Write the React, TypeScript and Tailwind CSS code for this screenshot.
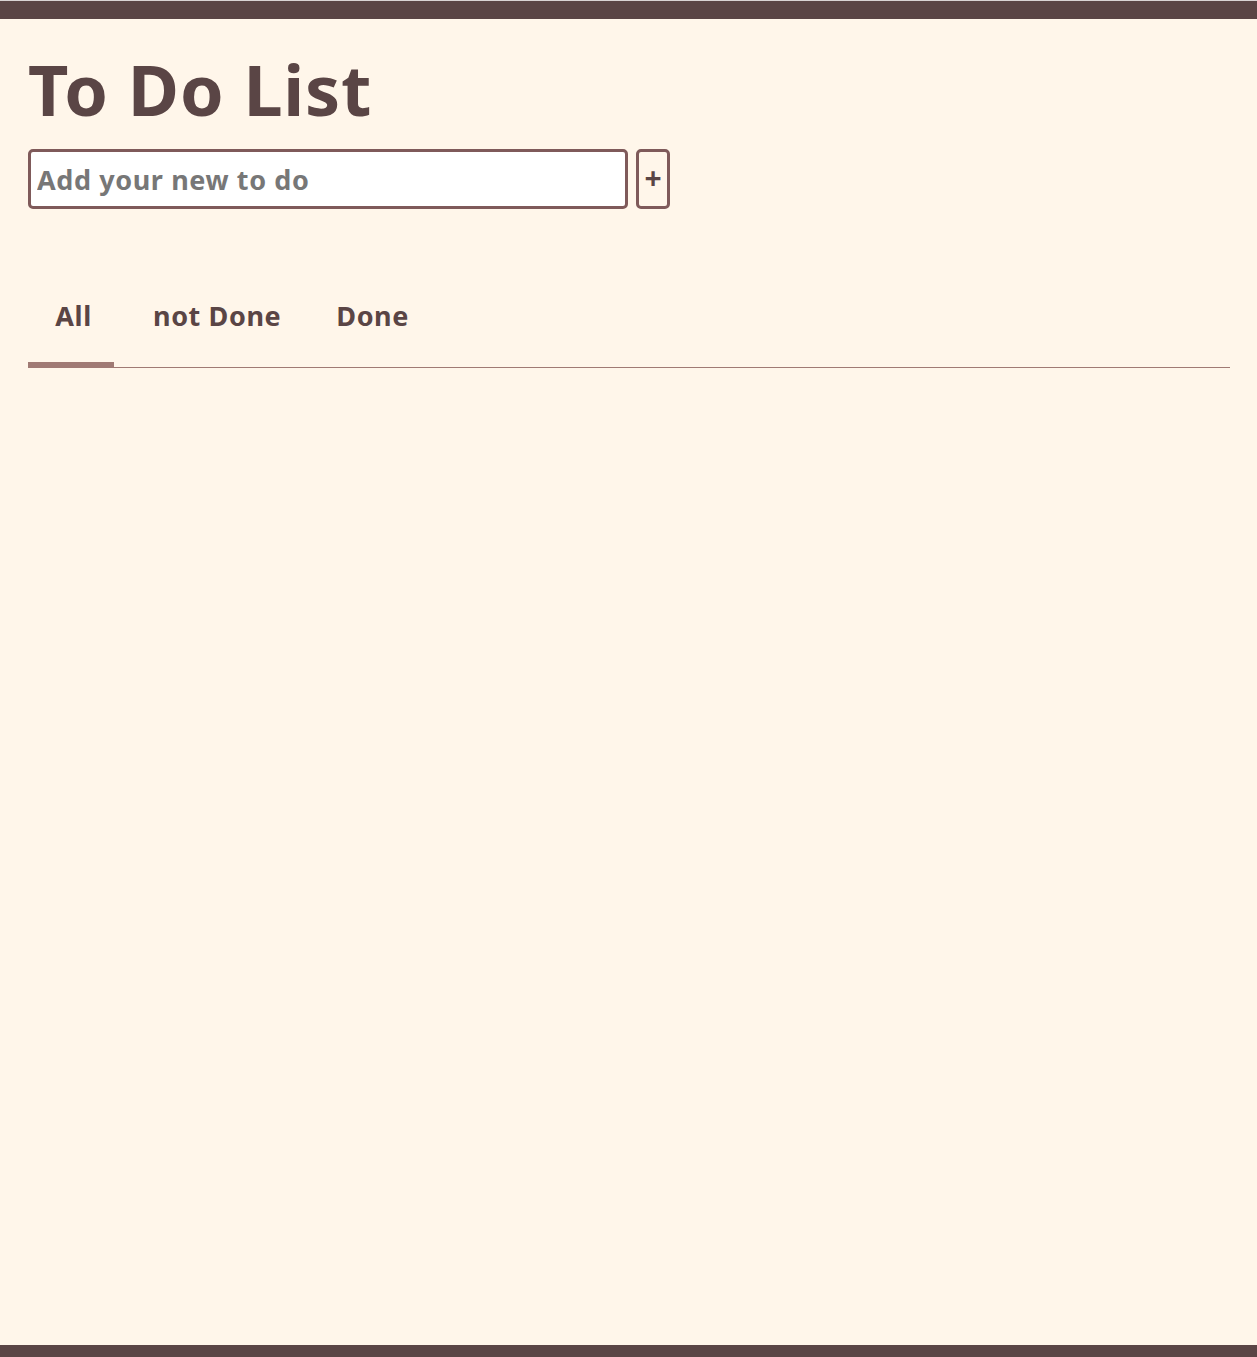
import React from "react";

export default function App() {
  const font = { fontFamily: '"Noto Sans", "Open Sans", sans-serif' };
  return (
    <div className="min-h-[1357px] bg-[#fff6ea] flex flex-col" style={font}>
      <div className="h-px bg-[#d9d4d4]" />
      <div className="h-[18px] bg-[#5a4545]" />
      <main className="flex-1 px-[28px] pr-[27px]">
        <h1 className="mt-[35px] text-[70px] leading-[70px] font-bold text-[#5a4545] tracking-[0.8px]">
          To Do List
        </h1>
        <div className="mt-[25px] flex gap-[8px]">
          <input
            className="w-[600px] h-[60px] bg-white border-[3px] border-[#7f5a5a] rounded-[5px] px-[6px] text-[27px] font-bold tracking-[0.6px] text-[#5a4545] placeholder:text-[#777] outline-none"
            placeholder="Add your new to do"
            style={font}
          />
          <button className="w-[34px] h-[60px] border-[3px] border-[#7f5a5a] rounded-[5px] text-[30px] font-bold text-[#5a4545] flex items-center justify-center pb-[4px]">
            +
          </button>
        </div>
        <div className="mt-[78px] border-b border-[#a07a74] flex">
          <div className="relative w-[86px] h-[80px] pb-[22px] flex items-center justify-center text-[27px] font-bold tracking-[0.6px] text-[#5a4545]">
            <span className="ml-[5px]">All</span>
            <div className="absolute left-0 right-0 bottom-[-1px] h-[6px] bg-[#a07a74]" />
          </div>
          <div className="h-[80px] pb-[22px] pl-[39px] pr-[35px] flex items-center text-[27px] font-bold tracking-[0.6px] text-[#5a4545]">
            not Done
          </div>
          <div className="h-[80px] pb-[22px] px-[20px] flex items-center text-[27px] font-bold tracking-[0.6px] text-[#5a4545]">
            Done
          </div>
        </div>
      </main>
      <div className="h-[12px] bg-[#5a4545]" />
    </div>
  );
}
